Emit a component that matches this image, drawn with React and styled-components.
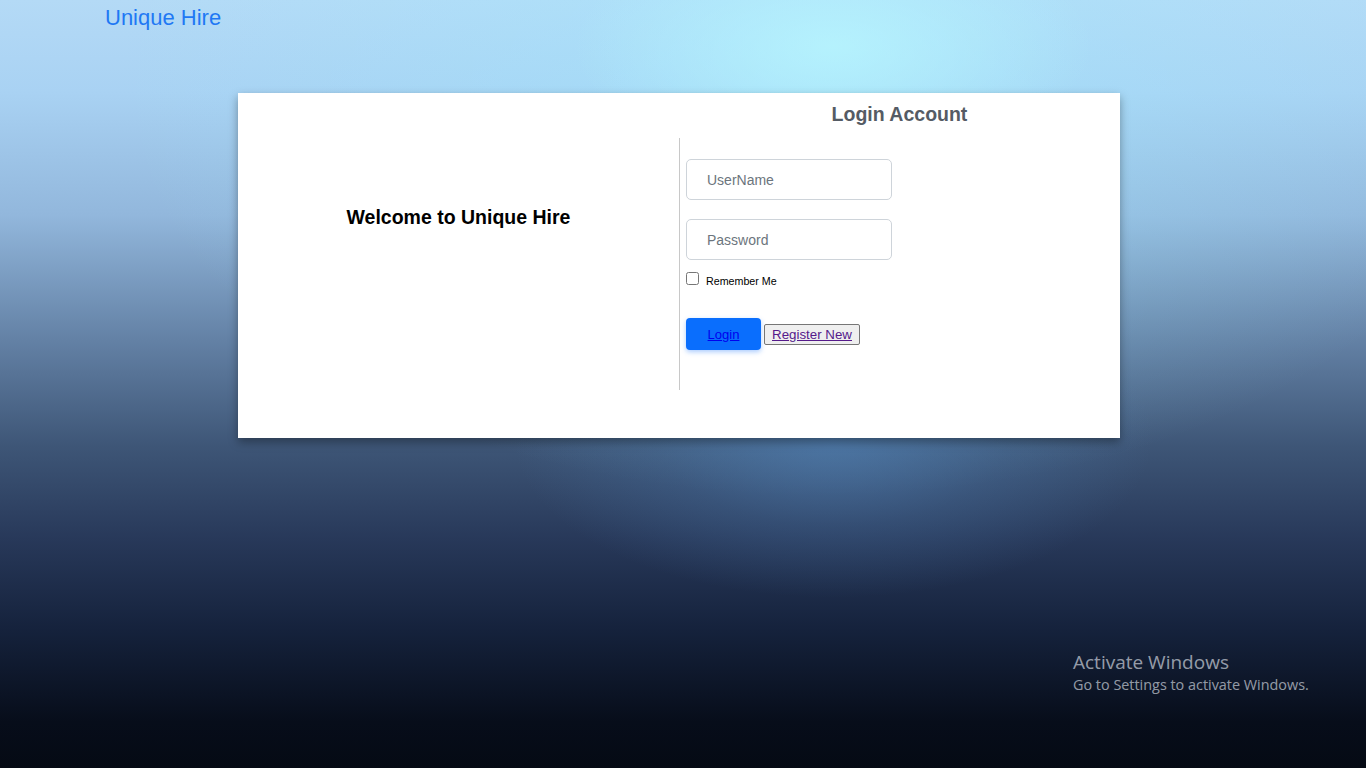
import styled, { createGlobalStyle } from "styled-components";

const GlobalStyle = createGlobalStyle`
  html, body {
    margin: 0;
    padding: 0;
  }
  body {
    font-family: "Liberation Sans", Arial, sans-serif;
    min-height: 768px;
    background:
      radial-gradient(ellipse 260px 120px at 61% 6%, rgba(185, 248, 255, 0.75), rgba(185, 248, 255, 0) 100%),
      radial-gradient(ellipse 320px 160px at 61% 57%, rgba(80, 128, 180, 0.7), rgba(80, 128, 180, 0.25) 55%, rgba(80, 128, 180, 0) 100%),
      radial-gradient(ellipse 700px 420px at 60% 10%, rgba(160, 235, 255, 0.45), rgba(160, 235, 255, 0) 100%),
      linear-gradient(
        to bottom,
        #b4daf6 0%,
        #a9d2f3 12%,
        #92b7dc 28%,
        #6482a6 44%,
        #3e5677 58%,
        #28395a 70%,
        #15223c 82%,
        #070d1a 94%,
        #050a14 100%
      );
    background-repeat: no-repeat;
  }
`;

const Page = styled.div`
  position: relative;
  min-height: 768px;
`;

const Header = styled.header`
  padding: 5px 0 0 105px;
  height: 93px;
  box-sizing: border-box;
`;

const Brand = styled.a`
  font-size: 22px;
  color: #1f78f4;
  text-decoration: none;
  line-height: 26px;
`;

const Card = styled.div`
  margin-left: 238px;
  width: 882px;
  background: #fff;
  display: flex;
  box-shadow: 0 4px 9px rgba(0, 0, 0, 0.35);
`;

const Column = styled.div`
  width: 50%;
  box-sizing: border-box;
`;

const LeftColumn = styled(Column)`
  padding-top: 113px;
  text-align: center;
`;

const RightColumn = styled(Column)`
  padding-bottom: 48px;
`;

const Welcome = styled.h2`
  margin: 0;
  font-size: 19.5px;
  line-height: 23px;
  font-weight: 700;
  color: #000;
`;

const Title = styled.h2`
  margin: 10px 0 12px;
  font-size: 19.5px;
  line-height: 23px;
  font-weight: 700;
  color: #555b64;
  text-align: center;
`;

const Form = styled.form`
  border-left: 1px solid #c8c8c8;
  height: 252px;
  box-sizing: border-box;
  padding: 21px 0 0 6px;
  display: flex;
  flex-direction: column;
  align-items: flex-start;
`;

const Input = styled.input`
  width: 206px;
  height: 41px;
  box-sizing: border-box;
  border: 1px solid #ced4da;
  border-radius: 5px;
  padding: 0 20px;
  font-family: "Liberation Sans", Arial, sans-serif;
  font-size: 14px;
  color: #212529;
  margin-top: ${(p) => (p.$gap ? "19px" : "0")};
  &::placeholder {
    color: #6c757d;
  }
`;

const CheckRow = styled.label`
  display: flex;
  align-items: flex-start;
  margin-top: 12px;
  font-size: 10.7px;
  color: #000;
`;

const Check = styled.input`
  width: 13px;
  height: 13px;
  margin: 0 7px 0 0;
`;

const CheckText = styled.span`
  padding-top: 3px;
`;

const Buttons = styled.div`
  display: flex;
  align-items: center;
  margin-top: 31px;
`;

const LoginButton = styled.button`
  width: 75px;
  height: 32px;
  border: none;
  border-radius: 4px;
  background: #0a6efd;
  box-shadow: 0 2px 5px rgba(13, 110, 253, 0.35);
  font-family: "Liberation Sans", Arial, sans-serif;
  font-size: 13px;
  padding: 0;
  a {
    color: #0000ee;
    text-decoration: underline;
  }
`;

const RegisterButton = styled.button`
  margin-left: 3px;
  height: 21px;
  padding: 0 7px;
  border: 1px solid #767676;
  border-radius: 2px;
  background: #efefef;
  font-family: "Liberation Sans", Arial, sans-serif;
  font-size: 13.33px;
  a {
    color: #551a8b;
    text-decoration: underline;
  }
`;

const Watermark = styled.div`
  position: absolute;
  left: 1073px;
  top: 650px;
  font-family: "Open Sans", "Noto Sans", sans-serif;
  color: rgba(235, 240, 248, 0.62);
`;

const WatermarkTitle = styled.div`
  font-size: 19px;
  line-height: 24px;
`;

const WatermarkText = styled.div`
  font-size: 14.4px;
  line-height: 22px;
`;

const App = () => {
  return (
    <Page>
      <GlobalStyle />
      <Header>
        <Brand href="#">Unique Hire</Brand>
      </Header>

      <Card>
        <LeftColumn>
          <Welcome>Welcome to Unique Hire</Welcome>
        </LeftColumn>

        <RightColumn>
          <Title>Login Account</Title>
          <Form onSubmit={(e) => e.preventDefault()}>
            <Input type="text" placeholder="UserName" />
            <Input type="password" placeholder="Password" $gap />
            <CheckRow>
              <Check type="checkbox" />
              <CheckText>Remember Me</CheckText>
            </CheckRow>
            <Buttons>
              <LoginButton type="submit">
                <a href="#">Login</a>
              </LoginButton>
              <RegisterButton type="button">
                <a href="#">Register New</a>
              </RegisterButton>
            </Buttons>
          </Form>
        </RightColumn>
      </Card>

      <Watermark>
        <WatermarkTitle>Activate Windows</WatermarkTitle>
        <WatermarkText>Go to Settings to activate Windows.</WatermarkText>
      </Watermark>
    </Page>
  );
};

export default App;
